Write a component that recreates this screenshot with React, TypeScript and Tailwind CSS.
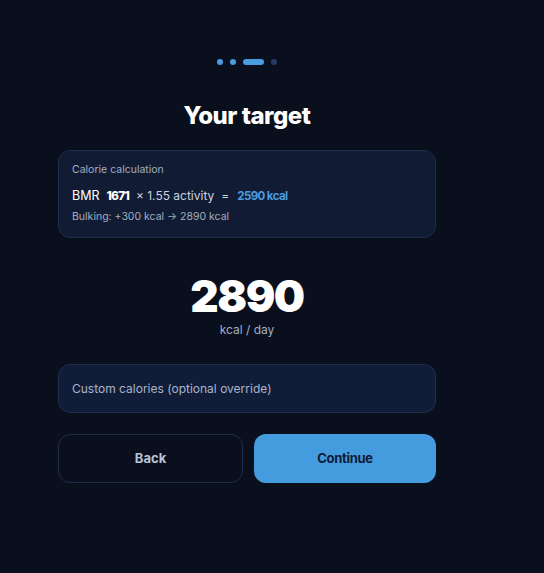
import React from 'react'

const heading = { fontFamily: 'Inter, "Noto Sans", sans-serif' }

function StepDots({ current, total }: { current: number; total: number }) {
  return (
    <div className="flex items-center justify-center gap-[7px]">
      {Array.from({ length: total }).map((_, i) => {
        if (i === current) return <span key={i} className="h-[6px] w-[21px] rounded-full bg-[#4a9ce0]" />
        return (
          <span
            key={i}
            className={i < current ? 'h-[6px] w-[6px] rounded-full bg-[#4a9ce0]' : 'h-[6px] w-[6px] rounded-full bg-[#253a66]'}
          />
        )
      })}
    </div>
  )
}

export default function App() {
  return (
    <div
      className="min-h-[573px] w-full bg-[#0a0f1d] text-white"
      style={{ fontFamily: 'Inter, "Noto Sans", sans-serif' }}
    >
      <div className="ml-[58px] flex w-[378px] flex-col pt-[59px]">
        <StepDots current={2} total={4} />

        <h1 className="mt-[35px] text-center text-[24px] font-extrabold leading-[32px] tracking-[-0.5px]" style={heading}>
          Your target
        </h1>

        {/* calorie breakdown */}
        <div className="mt-[18px] rounded-[12px] border border-[#1f2c4a] bg-[#111b33] px-[13px] pb-[13px] pt-[12px]">
          <div className="text-[10.5px] leading-[14px] text-[#a3aec2]">Calorie calculation</div>
          <div className="mt-[10px] flex items-baseline text-[12px] leading-[18px] text-[#c9d2e0]">
            <span className="text-[12.5px] text-white">BMR</span>
            <span className="ml-[7px] text-[12px] font-extrabold tracking-[-0.8px] text-white">1671</span>
            <span className="ml-[7px]">× 1.55 activity</span>
            <span className="ml-[7px]">=</span>
            <span className="ml-[8px] text-[11.5px] font-bold tracking-[-0.6px] text-[#4a9ce0]">2590 kcal</span>
          </div>
          <div className="mt-[5px] text-[10.5px] leading-[14px] text-[#a3aec2]">Bulking: +300 kcal → 2890 kcal</div>
        </div>

        <div className="mt-[31px] flex flex-col items-center">
          <div className="text-[44px] font-black leading-[54px] tracking-[-1.5px]" style={heading}>
            2890
          </div>
          <div className="text-[12px] leading-[13px] text-[#a3aec2]">kcal / day</div>
        </div>

        <input
          className="mt-[28px] h-[49px] w-full rounded-[12px] border border-[#1f2d4d] bg-[#111d38] px-[13px] text-[12px] text-white outline-none placeholder:text-[#a9b4c8]"
          placeholder="Custom calories (optional override)"
        />

        <div className="mt-[21px] flex gap-[11px]">
          <button className="h-[49px] w-[185px] rounded-[12px] border border-[#1f2c4a] bg-transparent text-[13px] font-bold text-[#b8c3d5]">
            Back
          </button>
          <button className="h-[49px] flex-1 rounded-[12px] bg-[#449bdd] text-[13px] font-bold tracking-[-0.3px] text-[#0e1c36]">
            Continue
          </button>
        </div>
      </div>
    </div>
  )
}
